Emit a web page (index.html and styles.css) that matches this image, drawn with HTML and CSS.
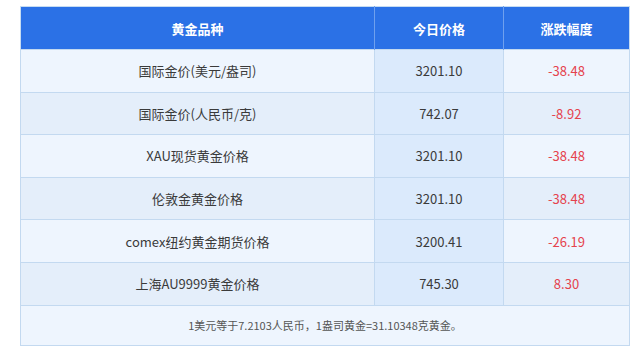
FILE: index.html
```html
<!DOCTYPE html>
<html lang="zh">
<head>
  <meta charset="UTF-8">
  <title>黄金价格</title>
  <link rel="stylesheet" href="styles.css">
</head>
<body>
  <div class="wrap">
    <table class="precios">
      <thead>
        <tr>
          <th class="c1">黄金品种</th>
          <th class="c2">今日价格</th>
          <th class="c3">涨跌幅度</th>
        </tr>
      </thead>
      <tbody>
        <tr>
          <td>国际金价(美元/盎司)</td>
          <td class="precio">3201.10</td>
          <td class="cambio">-38.48</td>
        </tr>
        <tr class="par">
          <td>国际金价(人民币/克)</td>
          <td class="precio">742.07</td>
          <td class="cambio">-8.92</td>
        </tr>
        <tr>
          <td>XAU现货黄金价格</td>
          <td class="precio">3201.10</td>
          <td class="cambio">-38.48</td>
        </tr>
        <tr class="par">
          <td>伦敦金黄金价格</td>
          <td class="precio">3201.10</td>
          <td class="cambio">-38.48</td>
        </tr>
        <tr>
          <td>comex纽约黄金期货价格</td>
          <td class="precio">3200.41</td>
          <td class="cambio">-26.19</td>
        </tr>
        <tr class="par">
          <td>上海AU9999黄金价格</td>
          <td class="precio">745.30</td>
          <td class="cambio">8.30</td>
        </tr>
        <tr class="nota">
          <td colspan="3">1美元等于7.2103人民币，1盎司黄金=31.10348克黄金。</td>
        </tr>
      </tbody>
    </table>
  </div>
</body>
</html>
```

FILE: styles.css
```css
body {
  margin: 0;
  padding: 0;
  background: #fff;
  font-family: "Microsoft YaHei", "Noto Sans CJK SC", "Noto Sans", sans-serif;
}
.wrap {
  padding: 6px 10px 0 20px;
}
.precios {
  width: 610px;
  border-collapse: collapse;
  table-layout: fixed;
  border: 1px solid #c6dcf2;
}
.precios th {
  background: #2b71e6;
  color: #fff;
  font-size: 13px;
  font-weight: bold;
  height: 42px;
  padding: 0;
  text-align: center;
  border-left: 1px solid #6fa0ee;
}
.precios th.c1 {
  width: 353px;
  border-left: none;
}
.precios th.c2 {
  width: 128px;
}
.precios td {
  height: 42.6px;
  box-sizing: border-box;
  padding: 0;
  text-align: center;
  font-size: 13px;
  color: #3a3a3a;
  background: #eef5fe;
  border: 1px solid #c3d9f0;
}
.precios tr.par td {
  background: #e4eefa;
}
.precios td.precio,
.precios tr.par td.precio {
  background: #dbeafc;
}
.precios td.cambio {
  color: #e5424d;
}
.precios tr.nota td {
  height: 40px;
  font-size: 11px;
  color: #555;
  background: #eef5fe;
}
```
